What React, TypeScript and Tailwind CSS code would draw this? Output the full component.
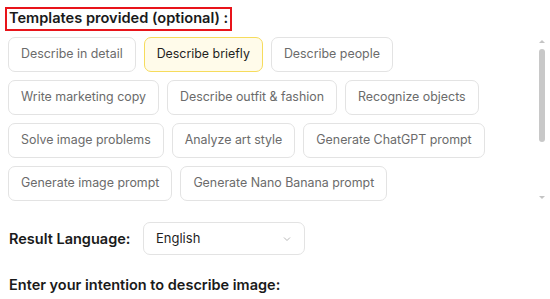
import React, { useState } from 'react';

const templates = [
  'Describe in detail',
  'Describe briefly',
  'Describe people',
  'Write marketing copy',
  'Describe outfit & fashion',
  'Recognize objects',
  'Solve image problems',
  'Analyze art style',
  'Generate ChatGPT prompt',
  'Generate image prompt',
  'Generate Nano Banana prompt',
];

export default function App() {
  const [active, setActive] = useState('Describe briefly');

  return (
    <div className="w-[550px] h-[299px] overflow-hidden bg-white font-['Inter',sans-serif] text-[#1a1a1a]">
      {/* Header */}
      <div className="pl-[5px] pt-[5px]">
        <span className="inline-block border-2 border-[#e8141a] px-[2px] h-[24px] leading-[19px] text-[14.6px] font-semibold">
          Templates provided (optional) :
        </span>
      </div>

      {/* Templates + scrollbar */}
      <div className="flex mt-[6px] h-[165px]">
        <div className="flex-1 flex flex-wrap content-start gap-[8px] pl-[8px] pr-[20px]">
          {templates.map(t => (
            <button
              key={t}
              onClick={() => setActive(t)}
              className={`h-[35px] px-[12px] rounded-[7px] border text-[12.4px] whitespace-nowrap ${
                active === t
                  ? 'bg-[#fffbea] border-[#f6dc5c] text-[#1f1f1f]'
                  : 'bg-white border-[#e3e3e3] text-[#6b6b6b]'
              }`}
            >
              {t}
            </button>
          ))}
        </div>
        {/* scrollbar */}
        <div className="w-[10px] mr-[3px] flex flex-col items-center pt-[3px]">
          <div className="w-0 h-0 border-l-[3px] border-r-[3px] border-b-[3px] border-l-transparent border-r-transparent border-b-[#c4c4c4]" />
          <div className="w-[6px] h-[93px] mt-[6px] rounded-full bg-[#c8c8c8]" />
          <div className="flex-1" />
          <div className="w-0 h-0 mb-[3px] border-l-[3px] border-r-[3px] border-t-[3px] border-l-transparent border-r-transparent border-t-[#c4c4c4]" />
        </div>
      </div>

      {/* Result language */}
      <div className="flex items-center mt-[20px] pl-[9px]">
        <span className="w-[134px] text-[14.5px] font-semibold">Result Language:</span>
        <div className="w-[162px] h-[33px] rounded-[7px] border border-[#e3e3e3] flex items-center justify-between pl-[12px] pr-[12px]">
          <span className="text-[13px] text-[#1f1f1f]">English</span>
          <svg width="10" height="10" viewBox="0 0 10 10" fill="none" stroke="#b8b8b8" strokeWidth="1">
            <path d="M2 3.5 L5 6.5 L8 3.5" />
          </svg>
        </div>
      </div>

      <div className="mt-[19px] pl-[9px] text-[14.5px] font-semibold">
        Enter your intention to describe image:
      </div>
    </div>
  );
}
